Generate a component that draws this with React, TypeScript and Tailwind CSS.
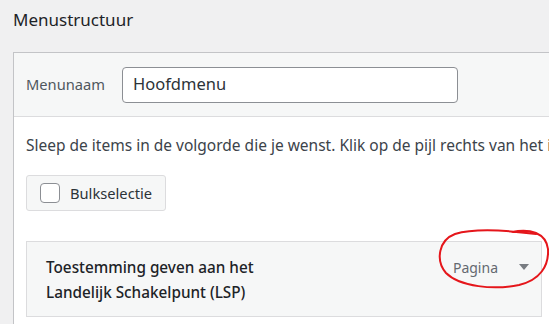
import React from 'react';

const font = { fontFamily: '"Noto Sans", "Open Sans", sans-serif' };

const MenuItem: React.FC<{ title: string[]; type: string }> = ({ title, type }) => (
  <div className="flex items-start justify-between border border-[#dcdcde] bg-[#f6f7f7] pl-[19px] pr-[12px] pt-[13px] h-[76px] w-[516px]">
    <div className="text-[15.3px] font-medium leading-[25px] text-[#1d2327]">
      {title.map((line) => (
        <div key={line}>{line}</div>
      ))}
    </div>
    <div className="flex items-center h-[25px] text-[14px] text-[#646970]">
      <span>{type}</span>
      <svg className="ml-[21px]" width="10" height="7" viewBox="0 0 10 7">
        <path d="M0 0 L10 0 L5 6 Z" fill="#787c82" />
      </svg>
    </div>
  </div>
);

export default function App() {
  return (
    <div className="relative w-[549px] h-[324px] overflow-hidden bg-[#f0f0f1]" style={font}>
      <h2 className="h-[52px] pl-[13px] pt-[6px] text-[17px] leading-[28px] text-[#1d2327]">
        Menustructuur
      </h2>
      <div className="ml-[13px] w-[600px] border border-[#c3c4c7] bg-white">
        <div className="flex items-center h-[64px] border-b border-[#dcdcde] bg-[#f6f7f7] px-[12px]">
          <label className="w-[96px] text-[14.7px] text-[#50575e]">Menunaam</label>
          <div className="flex items-center h-[36px] w-[336px] rounded-[4px] border border-[#8c8f94] bg-white px-[10px] text-[16.5px] text-[#2c3338]">
            Hoofdmenu
          </div>
        </div>
        <div className="px-[12px] pb-[20px]">
          <p className="mt-[18px] whitespace-nowrap text-[15.5px] leading-[20px] text-[#3c434a]">
            Sleep de items in de volgorde die je wenst. Klik op de pijl rechts van het item om meer instellingen te zien.
          </p>
          <button className="mt-[20px] flex items-center gap-[10px] h-[36px] w-[140px] rounded-[3px] border border-[#dcdcde] bg-[#f6f7f7] pl-[13px] text-[14.7px] text-[#2c3338]">
            <span className="block h-[20px] w-[20px] rounded-[4px] border border-[#8c8f94] bg-white" />
            Bulkselectie
          </button>
          <div className="mt-[30px]">
            <MenuItem title={['Toestemming geven aan het', 'Landelijk Schakelpunt (LSP)']} type="Pagina" />
          </div>
        </div>
      </div>
      <svg className="absolute left-0 top-0 pointer-events-none" width="549" height="324" viewBox="0 0 549 324">
        <path
          d="M 512 232 C 530 228, 546 233, 548 249 C 549 266, 540 280, 519 285 C 494 290, 460 287, 446 273 C 435 260, 439 240, 455 234 C 475 228, 505 230, 536 234"
          fill="none"
          stroke="#e5161b"
          strokeWidth="2"
          strokeLinecap="round"
        />
      </svg>
    </div>
  );
}
